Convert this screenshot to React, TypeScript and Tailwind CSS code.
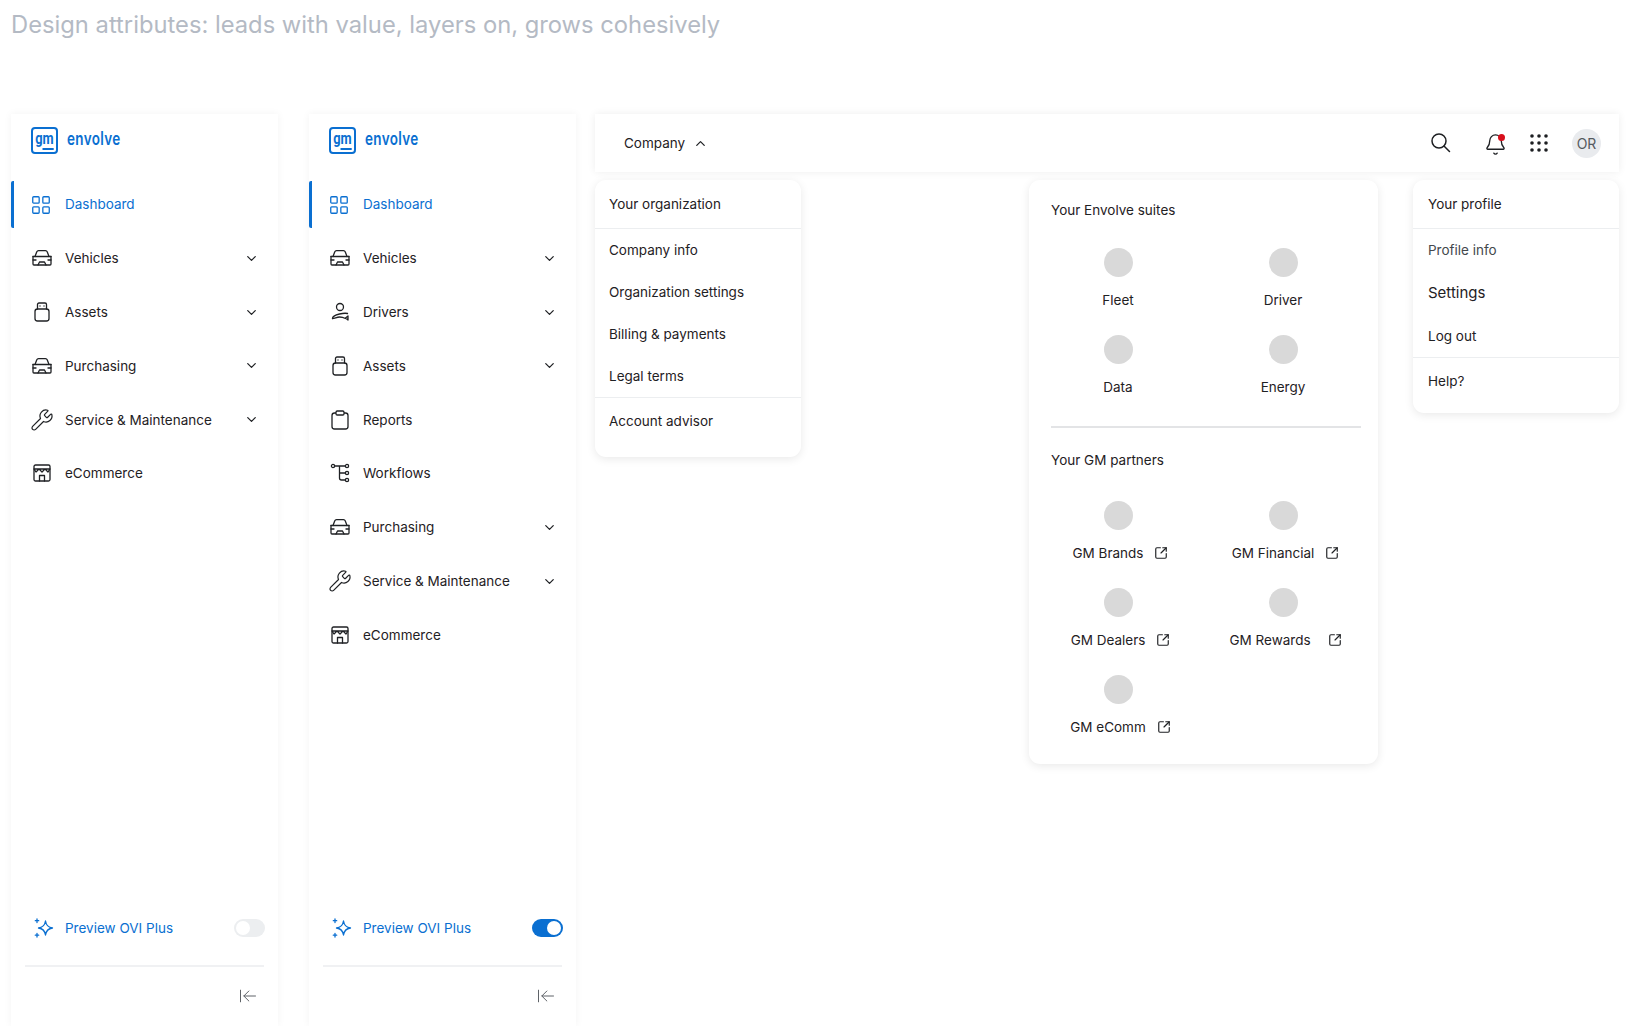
import {
  ArrowLeftToLine,
  Bell,
  ChevronDown,
  ChevronUp,
  LayoutGrid,
  SquareArrowOutUpRight,
  Wrench,
} from "lucide-react";
import type { ReactNode } from "react";

const iconProps = {
  width: 24,
  height: 24,
  viewBox: "0 0 24 24",
  fill: "none",
  stroke: "currentColor",
  strokeWidth: 1.3,
  strokeLinecap: "round" as const,
  strokeLinejoin: "round" as const,
};

function CarIcon() {
  return (
    <svg {...iconProps}>
      <path d="M5 10.500L6.700 6A2 2 0 0 1 8.600 4.700h6.800A2 2 0 0 1 17.300 6l1.700 4.500" />
      <path d="M3 10.500h18" />
      <path d="M3 10.500v7.500a1 1 0 0 0 1 1h16a1 1 0 0 0 1-1v-7.500" />
      <path d="M3 14h3M21 14h-3M8 19l1.500-3h5l1.500 3" />
    </svg>
  );
}

function UsbIcon() {
  return (
    <svg {...iconProps}>
      <path d="M7.500 9V4.500A1.500 1.500 0 0 1 9 3h6a1.500 1.500 0 0 1 1.500 1.500V9" />
      <rect x="5" y="9" width="14" height="12" rx="2.500" />
      <path d="M10 6h.01M14 6h.01" />
    </svg>
  );
}

function StoreIcon() {
  return (
    <svg {...iconProps}>
      <rect x="4" y="4" width="16" height="16" rx="1.500" />
      <path d="M4 8h16M4 8l2 3 3-3 3 3 3-3 3 3 2-3" />
      <path d="M9.500 20v-5.500h5V20" />
    </svg>
  );
}

function ClipboardIcon() {
  return (
    <svg {...iconProps}>
      <rect x="4" y="5" width="16" height="16" rx="2.500" />
      <rect x="8" y="3" width="8" height="4" rx="1.200" fill="white" />
    </svg>
  );
}

function DriverIcon() {
  return (
    <svg {...iconProps}>
      <circle cx="12" cy="7" r="3.500" />
      <path d="M4.500 18.500c0-2 3-3.500 7-4.500 3-.700 6-1 8-.500" />
      <path d="M4.500 18.500c2 0 4.500-1.500 7-1.500s5 1 6 1.500" />
      <path d="M20 16v4l-2.500-2z" />
    </svg>
  );
}

function WorkflowIcon() {
  return (
    <svg {...iconProps}>
      <circle cx="5" cy="5" r="1.600" />
      <circle cx="19" cy="5" r="1.600" />
      <circle cx="19" cy="12" r="1.600" />
      <circle cx="19" cy="19" r="1.600" />
      <path d="M6.600 5h10.800M11.500 5v12a2 2 0 0 0 2 2h3.900M11.500 12h5.900" />
    </svg>
  );
}

function SparkleIcon() {
  return (
    <svg {...iconProps}>
      <path d="M14.500 5c.6 4.200 2.800 6.400 7 7-4.200.6-6.400 2.800-7 7-.6-4.200-2.800-6.400-7-7 4.200-.6 6.400-2.800 7-7z" />
      <path d="M6 3v3.500M4.300 4.700h3.400M6 17.500V21M4.300 19.200h3.400" />
    </svg>
  );
}

function SearchIcon() {
  return (
    <svg {...iconProps} strokeWidth={1.5} className="ml-auto text-[#1d1f22]">
      <circle cx="10" cy="10" r="7" />
      <path d="M15 15l5.500 5.500" />
    </svg>
  );
}

type NavItem = { label: string; icon: ReactNode; caret?: boolean };

const firstNav: NavItem[] = [
  { label: "Vehicles", icon: <CarIcon />, caret: true },
  { label: "Assets", icon: <UsbIcon />, caret: true },
  { label: "Purchasing", icon: <CarIcon />, caret: true },
  { label: "Service & Maintenance", icon: <Wrench size={24} strokeWidth={1.2} />, caret: true },
  { label: "eCommerce", icon: <StoreIcon /> },
];

const secondNav: NavItem[] = [
  { label: "Vehicles", icon: <CarIcon />, caret: true },
  { label: "Drivers", icon: <DriverIcon />, caret: true },
  { label: "Assets", icon: <UsbIcon />, caret: true },
  { label: "Reports", icon: <ClipboardIcon /> },
  { label: "Workflows", icon: <WorkflowIcon /> },
  { label: "Purchasing", icon: <CarIcon />, caret: true },
  { label: "Service & Maintenance", icon: <Wrench size={24} strokeWidth={1.2} />, caret: true },
  { label: "eCommerce", icon: <StoreIcon /> },
];

function Logo() {
  return (
    <div className="flex items-center gap-[9px] pl-5 text-[#0a6fd1]">
      <div className="flex h-[27px] w-[27px] items-center justify-center rounded-[4px] border-2 border-[#0a6fd1]">
        <span className="-translate-y-[2px] scale-x-[0.8] whitespace-nowrap font-['Roboto',sans-serif] text-[16px] leading-none font-bold">
          g<span className="border-b-2 border-[#0a6fd1]">m</span>
        </span>
      </div>
      <span className="origin-left -translate-y-[2px] scale-x-[0.75] text-[18px] leading-none font-semibold tracking-wide">envolve</span>
    </div>
  );
}

function Sidebar({ items, on }: { items: NavItem[]; on: boolean }) {
  return (
    <aside className="flex h-[912px] w-[267px] shrink-0 flex-col bg-white pt-[13px] shadow-[0_0_8px_rgba(0,0,0,0.05)]">
      <Logo />
      <nav className="mt-[27px] flex flex-col gap-[6.8px]">
        <div className="flex h-[47px] items-center gap-[13px] rounded-l-[2px] border-l-[3px] border-[#0a6fd1] pl-[16px] text-[#0a6fd1]">
          <LayoutGrid size={22} strokeWidth={1.4} />
          <span>Dashboard</span>
        </div>
        {items.map((item) => (
          <div key={item.label} className="flex h-[47px] items-center gap-[11px] pl-[19px] pr-[19px] text-[#1f2124]">
            <span className="flex w-[24px] justify-center">{item.icon}</span>
            <span className="flex-1">{item.label}</span>
            {item.caret && <ChevronDown size={15} strokeWidth={2} />}
          </div>
        ))}
      </nav>
      <div className="mt-auto flex items-center pl-[20px] pr-[13px] pb-[25px] text-[#0a6fd1]">
        <SparkleIcon />
        <span className="ml-[10px] flex-1">Preview OVI Plus</span>
        {on ? (
          <div className="flex h-[18px] w-[31px] items-center justify-end rounded-full bg-[#0a6fd1] px-[2px]">
            <div className="h-[14px] w-[14px] rounded-full bg-white" />
          </div>
        ) : (
          <div className="flex h-[18px] w-[31px] items-center rounded-full bg-[#eceef0] px-[2px]">
            <div className="h-[14px] w-[14px] rounded-full bg-white" />
          </div>
        )}
      </div>
      <div className="mx-[14px] border-t-2 border-[#f0f1f3]" />
      <div className="flex justify-end pr-[20px] pt-[19px] pb-[20px] text-[#5f6368]">
        <ArrowLeftToLine size={20} strokeWidth={1.2} />
      </div>
    </aside>
  );
}

function AppTile({ label, link, wide }: { label: string; link?: boolean; wide?: boolean }) {
  return (
    <div className="flex h-[87px] flex-col items-center">
      <div className="h-[29px] w-[29px] rounded-full bg-[#d9d9d9]" />
      <div className={`mt-[13px] flex items-center text-[#1f2124] ${link ? "ml-[5px]" : ""} ${wide ? "gap-[17px]" : "gap-[11px]"}`}>
        <span>{label}</span>
        {link && <SquareArrowOutUpRight size={14} strokeWidth={2} />}
      </div>
    </div>
  );
}

const cardClass = "bg-white shadow-[0_2px_10px_rgba(0,0,0,0.09)]";

export default function App() {
  return (
    <div className="h-[1026px] overflow-hidden bg-white pl-[11px] font-['Inter',sans-serif] text-[13.5px]">
      <h1 className="h-[114px] pt-[10px] text-[23.75px] leading-[30px] text-[#b4bac4]">
        Design attributes: leads with value, layers on, grows cohesively
      </h1>
      <div className="flex items-start">
        <Sidebar items={firstNav} on={false} />
        <div className="ml-[31px]">
          <Sidebar items={secondNav} on={true} />
        </div>
        <div className="ml-[19px] w-[1024px]">
          <header className="flex h-[58px] items-center bg-white pl-[29px] pr-[18px] shadow-[0_0_8px_rgba(0,0,0,0.07)]">
            <span className="text-[#1f2124]">Company</span>
            <ChevronUp size={15} strokeWidth={2} className="ml-[8px] text-[#1f2124]" />
            <SearchIcon />
            <div className="relative ml-[31px] mt-[3px] text-[#1d1f22]">
              <Bell size={23} strokeWidth={1.4} />
              <div className="absolute top-[1px] right-[2px] h-[7px] w-[7px] rounded-full bg-[#d80f1c]" />
            </div>
            <svg width="18" height="18" viewBox="0 0 18 18" className="ml-[23px] text-[#1d1f22]" fill="currentColor">
              {[2, 9, 16].map((y) =>
                [2, 9, 16].map((x) => <circle key={`${x}-${y}`} cx={x} cy={y} r="1.800" />),
              )}
            </svg>
            <div className="ml-[24px] flex h-[29px] w-[29px] items-center justify-center rounded-full bg-[#e9ebee] text-[14px] text-[#555a60]">OR</div>
          </header>
          <div className="mt-[8px] flex items-start">
            <div className={`${cardClass} h-[277px] w-[206px] rounded-[11px] text-[#1f2124]`}>
              <div className="flex h-[49px] items-center border-b border-[#eceef0] px-[14px]">Your organization</div>
              <div className="flex flex-col">
                <div className="flex h-[42px] items-center px-[14px]">Company info</div>
                <div className="flex h-[42px] items-center px-[14px]">Organization settings</div>
                <div className="flex h-[42px] items-center px-[14px]">Billing & payments</div>
                <div className="flex h-[42px] items-center px-[14px]">Legal terms</div>
              </div>
              <div className="flex h-[48px] items-center border-t border-[#eceef0] px-[14px]">Account advisor</div>
            </div>
            <div className={`${cardClass} ml-[228px] h-[584px] w-[349px] rounded-[11px] pl-[22px] pt-[20px] text-[#1f2124]`}>
              <h3 className="leading-[20px]">Your Envolve suites</h3>
              <div className="ml-[1px] mt-[28px] grid w-[297px] grid-cols-[132px_132px] gap-x-[33px]">
                <AppTile label="Fleet" />
                <AppTile label="Driver" />
                <AppTile label="Data" />
                <AppTile label="Energy" />
              </div>
              <div className="mt-[4px] w-[310px] border-t-2 border-[#e3e4e6]" />
              <h3 className="mt-[22px] leading-[20px]">Your GM partners</h3>
              <div className="ml-[1px] mt-[31px] grid w-[297px] grid-cols-[132px_132px] gap-x-[33px]">
                <AppTile label="GM Brands" link />
                <AppTile label="GM Financial" link />
                <AppTile label="GM Dealers" link />
                <AppTile label="GM Rewards" link wide />
                <AppTile label="GM eComm" link />
              </div>
            </div>
            <div className={`${cardClass} ml-auto h-[233px] w-[206px] rounded-[11px] text-[#1f2124]`}>
              <div className="flex h-[49px] items-center border-b border-[#eceef0] px-[15px]">Your profile</div>
              <div className="flex h-[43px] items-center px-[15px] text-[#44484d]">Profile info</div>
              <div className="flex h-[43px] items-center px-[15px] text-[15px]">Settings</div>
              <div className="flex h-[42px] items-center px-[15px]">Log out</div>
              <div className="flex h-[48px] items-center border-t border-[#eceef0] px-[15px]">Help?</div>
            </div>
          </div>
        </div>
      </div>
    </div>
  );
}
